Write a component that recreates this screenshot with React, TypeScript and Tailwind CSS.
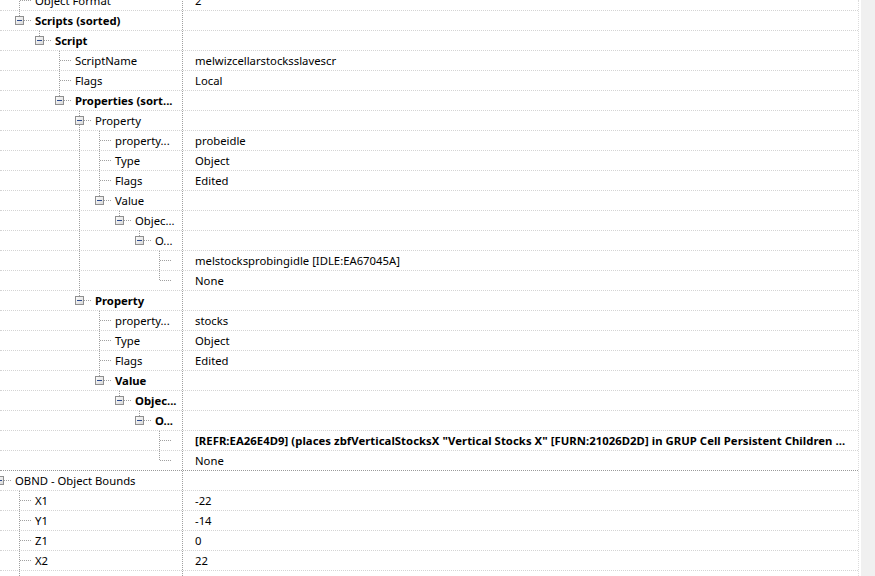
import React from "react";

interface Row {
  level: number;
  name: string;
  value?: string;
  bold?: boolean;
  open?: boolean;
  more?: boolean;
  dark?: boolean;
}

const rows: Row[] = [
  { level: 1, name: "Object Format", value: "2" },
  { level: 1, name: "Scripts (sorted)", bold: true, open: true },
  { level: 2, name: "Script", bold: true, open: true },
  { level: 3, name: "ScriptName", value: "melwizcellarstocksslavescr" },
  { level: 3, name: "Flags", value: "Local" },
  { level: 3, name: "Properties (sort...", bold: true, open: true },
  { level: 4, name: "Property", open: true },
  { level: 5, name: "property...", value: "probeidle" },
  { level: 5, name: "Type", value: "Object" },
  { level: 5, name: "Flags", value: "Edited" },
  { level: 5, name: "Value", open: true },
  { level: 6, name: "Objec...", open: true },
  { level: 7, name: "O...", open: true },
  { level: 8, name: "", value: "melstocksprobingidle [IDLE:EA67045A]" },
  { level: 8, name: "", value: "None" },
  { level: 4, name: "Property", bold: true, open: true },
  { level: 5, name: "property...", value: "stocks" },
  { level: 5, name: "Type", value: "Object" },
  { level: 5, name: "Flags", value: "Edited" },
  { level: 5, name: "Value", bold: true, open: true },
  { level: 6, name: "Objec...", bold: true, open: true },
  { level: 7, name: "O...", bold: true, open: true },
  {
    level: 8,
    name: "",
    bold: true,
    value:
      '[REFR:EA26E4D9] (places zbfVerticalStocksX "Vertical Stocks X" [FURN:21026D2D] in GRUP Cell Persistent Children ...',
  },
  { level: 8, name: "", value: "None", dark: true },
  { level: 0, name: "OBND - Object Bounds", open: true, more: true },
  { level: 1, name: "X1", value: "-22" },
  { level: 1, name: "Y1", value: "-14" },
  { level: 1, name: "Z1", value: "0" },
  { level: 1, name: "X2", value: "22", more: true },
  // next row only peeks in at the bottom edge, its text is off-screen
  { level: 1, name: "", more: true },
];

// padding for the name text at each tree level
const indent = [
  "pl-[15px]",
  "pl-[35px]",
  "pl-[55px]",
  "pl-[75px]",
  "pl-[95px]",
  "pl-[115px]",
  "pl-[135px]",
  "pl-[155px]",
  "pl-[175px]",
];

function hasNext(i: number) {
  const L = rows[i].level;
  for (let j = i + 1; j < rows.length; j++) {
    if (rows[j].level < L) return false;
    if (rows[j].level === L) return true;
  }
  return !!rows[i].more;
}

function TreeLines({ i }: { i: number }) {
  const row = rows[i];
  const L = row.level;
  const lines: React.ReactNode[] = [];
  const dot = { stroke: "#a0a0a0", strokeDasharray: "1 1" };

  // vertical lines of ancestors that still have siblings below
  for (let k = 1; k < L; k++) {
    let j = i;
    while (j >= 0 && rows[j].level !== k) j--;
    if (j >= 0 && hasNext(j)) {
      const x = 20 * k - 1 + 0.5;
      lines.push(<line key={"a" + k} x1={x} y1={0} x2={x} y2={20} {...dot} />);
    }
  }

  const cx = 20 * L - 1;
  if (L >= 1) {
    lines.push(
      <line key="v" x1={cx + 0.5} y1={0} x2={cx + 0.5} y2={hasNext(i) ? 20 : 9} {...dot} />
    );
  }
  lines.push(<line key="h" x1={cx + 1} y1={9.5} x2={20 * L + 12} y2={9.5} {...dot} />);

  return (
    <svg
      className="absolute left-0 top-0"
      width={183}
      height={20}
      shapeRendering="crispEdges"
    >
      <defs>
        <linearGradient id="bx" x1="0" y1="0" x2="1" y2="1">
          <stop offset="0" stopColor="#ffffff" />
          <stop offset="1" stopColor="#d6d6d6" />
        </linearGradient>
      </defs>
      {lines}
      {row.open && (
        <g>
          <rect x={cx - 4 + 0.5} y={5.5} width={8} height={8} fill="url(#bx)" stroke="#8f8f8f" />
          <line x1={cx - 2} y1={9.5} x2={cx + 3} y2={9.5} stroke="#2b4a8e" />
        </g>
      )}
    </svg>
  );
}

export default function App() {
  return (
    <div
      className="w-[875px] h-[576px] overflow-hidden flex bg-white text-black text-[11.3px]"
      style={{ fontFamily: '"Noto Sans", "Liberation Sans", sans-serif' }}
    >
      <div className="w-[859px] h-full overflow-hidden border-r border-dotted border-[#dcdcdc]">
        <div className="mt-[-9px]">
          {rows.map((r, i) => (
            <div
              key={i}
              className={
                "flex h-[20px] border-b border-dotted " +
                (r.dark ? "border-[#9a9a9a]" : "border-[#d4d4d4]")
              }
            >
              {/* name column */}
              <div
                className={
                  "relative w-[183px] shrink-0 flex items-center pt-[1px] whitespace-nowrap overflow-hidden border-r border-dotted border-[#a0a0a0] " +
                  indent[r.level]
                }
              >
                <TreeLines i={i} />
                <span className={"relative " + (r.bold ? "font-bold" : "")}>{r.name}</span>
              </div>
              {/* value column */}
              <div
                className={
                  "flex-1 flex items-center pt-[1px] pl-[12px] whitespace-nowrap overflow-hidden " +
                  (r.bold ? "font-bold tracking-[0.05px]" : "")
                }
              >
                {r.value}
              </div>
            </div>
          ))}
        </div>
      </div>
      <div className="w-[2px]" />
      <div className="w-[14px] h-full bg-[#f0f0f0]" />
    </div>
  );
}
